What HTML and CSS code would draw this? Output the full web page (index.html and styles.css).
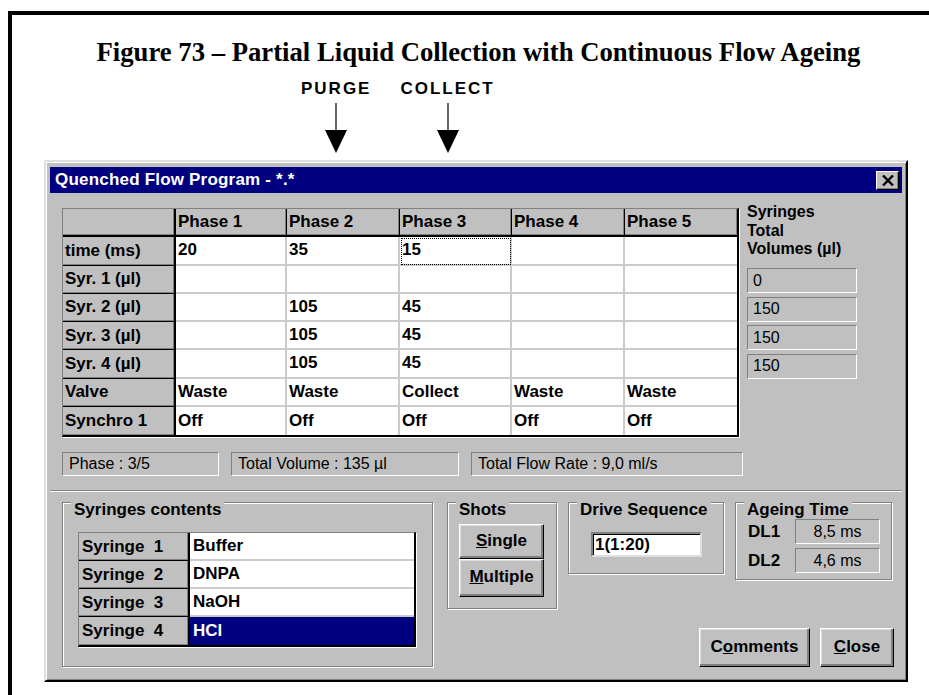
FILE: index.html
```html
<!DOCTYPE html>
<html lang="en">
<head>
    <meta charset="UTF-8">
    <title>Figure 73 - Quenched Flow Program</title>
    <link rel="stylesheet" href="styles.css">
</head>
<body>
    <div class="frame">
        <h1 class="fig-title">Figure 73 – Partial Liquid Collection with Continuous Flow Ageing</h1>

        <!-- Marcadores sobre las fases -->
        <div class="markers">
            <div class="marker marker-purge">
                <span class="marker-label">PURGE</span>
                <svg class="arrow" width="24" height="50" viewBox="0 0 24 50"><line x1="12" y1="0" x2="12" y2="28" stroke="#000" stroke-width="1.2"/><polygon points="1,27 23,27 12,50" fill="#000"/></svg>
            </div>
            <div class="marker marker-collect">
                <span class="marker-label">COLLECT</span>
                <svg class="arrow" width="24" height="50" viewBox="0 0 24 50"><line x1="12" y1="0" x2="12" y2="28" stroke="#000" stroke-width="1.2"/><polygon points="1,27 23,27 12,50" fill="#000"/></svg>
            </div>
        </div>

        <div class="window">
            <div class="titlebar">
                <span>Quenched Flow Program - *.*</span>
                <div class="close-x"><svg width="12" height="11" viewBox="0 0 12 11"><path d="M1 0.5 L11 10.5 M11 0.5 L1 10.5" stroke="#000" stroke-width="2.4"/></svg></div>
            </div>

            <div class="win-body">
                <div class="top">
                    <!-- Tabla de fases -->
                    <div class="prog">
                        <div class="c h hr hc"></div>
                        <div class="c h hr">Phase 1</div>
                        <div class="c h hr">Phase 2</div>
                        <div class="c h hr">Phase 3</div>
                        <div class="c h hr">Phase 4</div>
                        <div class="c h hr last-col">Phase 5</div>

                        <div class="c h hc">time (ms)</div>
                        <div class="c">20</div>
                        <div class="c">35</div>
                        <div class="c focus">15</div>
                        <div class="c"></div>
                        <div class="c last-col"></div>

                        <div class="c h hc">Syr. 1 (µl)</div>
                        <div class="c"></div>
                        <div class="c"></div>
                        <div class="c"></div>
                        <div class="c"></div>
                        <div class="c last-col"></div>

                        <div class="c h hc">Syr. 2 (µl)</div>
                        <div class="c"></div>
                        <div class="c">105</div>
                        <div class="c">45</div>
                        <div class="c"></div>
                        <div class="c last-col"></div>

                        <div class="c h hc">Syr. 3 (µl)</div>
                        <div class="c"></div>
                        <div class="c">105</div>
                        <div class="c">45</div>
                        <div class="c"></div>
                        <div class="c last-col"></div>

                        <div class="c h hc">Syr. 4 (µl)</div>
                        <div class="c"></div>
                        <div class="c">105</div>
                        <div class="c">45</div>
                        <div class="c"></div>
                        <div class="c last-col"></div>

                        <div class="c h hc">Valve</div>
                        <div class="c">Waste</div>
                        <div class="c">Waste</div>
                        <div class="c">Collect</div>
                        <div class="c">Waste</div>
                        <div class="c last-col">Waste</div>

                        <div class="c h hc last-row">Synchro 1</div>
                        <div class="c last-row">Off</div>
                        <div class="c last-row">Off</div>
                        <div class="c last-row">Off</div>
                        <div class="c last-row">Off</div>
                        <div class="c last-row last-col">Off</div>
                    </div>

                    <div class="totals">
                        <div class="totals-label">Syringes<br>Total<br>Volumes (µl)</div>
                        <div class="vboxes">
                            <div class="sunken vbox">0</div>
                            <div class="sunken vbox">150</div>
                            <div class="sunken vbox">150</div>
                            <div class="sunken vbox">150</div>
                        </div>
                    </div>
                </div>

                <div class="status">
                    <div class="sunken sbox s-phase">Phase : 3/5</div>
                    <div class="sunken sbox s-vol">Total Volume : 135 µl</div>
                    <div class="sunken sbox s-rate">Total Flow Rate : 9,0 ml/s</div>
                </div>

                <div class="sep"></div>

                <div class="bottom">
                    <div class="group g-syringes">
                        <div class="group-title">Syringes contents</div>
                        <div class="syr-table">
                            <div class="c h hc">Syringe&nbsp; 1</div>
                            <div class="c last-col">Buffer</div>
                            <div class="c h hc">Syringe&nbsp; 2</div>
                            <div class="c last-col">DNPA</div>
                            <div class="c h hc">Syringe&nbsp; 3</div>
                            <div class="c last-col">NaOH</div>
                            <div class="c h hc last-row">Syringe&nbsp; 4</div>
                            <div class="c last-col last-row selected">HCl</div>
                        </div>
                    </div>

                    <div class="right-col">
                        <div class="right-top">
                            <div class="group g-shots">
                                <div class="group-title">Shots</div>
                                <div class="shot-btns">
                                    <div class="btn btn-single"><u>S</u>ingle</div>
                                    <div class="btn btn-multiple"><u>M</u>ultiple</div>
                                </div>
                            </div>

                            <div class="group g-drive">
                                <div class="group-title">Drive Sequence</div>
                                <div class="field">1(1:20)</div>
                            </div>

                            <div class="group g-ageing">
                                <div class="group-title">Ageing Time</div>
                                <div class="age-row">
                                    <span class="age-label">DL1</span>
                                    <div class="sunken age-val">8,5 ms</div>
                                </div>
                                <div class="age-row">
                                    <span class="age-label">DL2</span>
                                    <div class="sunken age-val">4,6 ms</div>
                                </div>
                            </div>
                        </div>

                        <div class="actions">
                            <div class="btn btn-comments">C<u>o</u>mments</div>
                            <div class="btn btn-close"><u>C</u>lose</div>
                        </div>
                    </div>
                </div>
            </div>
        </div>
    </div>
</body>
</html>
```

FILE: styles.css
```css
/* Estilos globales */
body {
    margin: 0;
    background: #fff;
    font-family: "Liberation Sans", Arial, sans-serif;
    color: #000;
    overflow: hidden;
}

.frame {
    margin: 11px 0 0 8px;
    border-top: 4px solid #000;
    border-left: 4px solid #000;
    height: 700px;
}

/* Titulo de la figura */
.fig-title {
    margin: 0;
    padding: 22px 0 0 16px;
    font: bold 26.7px/30px "Liberation Serif", "Times New Roman", serif;
    text-align: center;
}

.markers {
    display: flex;
    gap: 29px;
    margin: 12px 0 0 289px;
}

.marker {
    display: flex;
    flex-direction: column;
    align-items: center;
}

.marker-label {
    font: bold 17px/19px "Liberation Sans", Arial, sans-serif;
    letter-spacing: 2px;
}

.arrow {
    display: block;
    margin-top: 5px;
}

/* Ventana */
.window {
    margin: 7px 0 0 32px;
    width: 864px;
    height: 522px;
    box-sizing: border-box;
    background: #c0c0c0;
    border: 2px solid;
    border-color: #dfdfdf #000 #000 #dfdfdf;
    box-shadow: inset 1px 1px 0 #fff, inset -1px -1px 0 #808080;
    padding: 5px 4px 4px 4px;
    display: flex;
    flex-direction: column;
    font-size: 17px;
}

.titlebar {
    height: 26px;
    flex: none;
    background: #000080;
    color: #fff;
    font-weight: bold;
    font-size: 17px;
    letter-spacing: 0.2px;
    display: flex;
    align-items: center;
    justify-content: space-between;
    padding: 0 3px 0 5px;
}

.close-x {
    width: 23px;
    height: 19px;
    box-sizing: border-box;
    background: #c0c0c0;
    border: 1px solid;
    border-color: #fff #000 #000 #fff;
    box-shadow: inset -1px -1px 0 #808080;
    display: flex;
    align-items: center;
    justify-content: center;
}

.win-body {
    flex: 1;
    display: flex;
    flex-direction: column;
    padding: 15px 8px 0 12px;
}

/* Tabla de programa */
.top {
    display: flex;
    align-items: flex-start;
    gap: 8px;
}

.prog {
    display: grid;
    grid-template-columns: 113px 111px 113px 112px 113px 112px;
    grid-auto-rows: 28.25px;
    border-top: 1px solid #808080;
    border-left: 1px solid #808080;
    border-right: 2px solid #000;
    border-bottom: 2px solid #000;
    box-shadow: 1px 1px 0 #fff;
}

.c {
    box-sizing: border-box;
    background: #fff;
    border-right: 2px solid #cbcbcb;
    border-bottom: 2px solid #cbcbcb;
    padding: 0 2px;
    display: flex;
    align-items: center;
    font-weight: bold;
    white-space: nowrap;
    overflow: hidden;
}

.c.h {
    background: #c0c0c0;
    border-right: 1px solid #000;
    border-bottom: 1px solid #000;
    box-shadow: inset -1px -1px 0 #808080;
}

.prog .hr {
    border-bottom: 2px solid #000;
}

.c.hc {
    border-right: 2px solid #000;
}

.c.last-col {
    border-right: none;
}

.c.last-row {
    border-bottom: none;
}

.focus {
    outline: 1px dotted #000;
    outline-offset: -2px;
}

.totals {
    width: 110px;
    margin-top: -5px;
}

.totals-label {
    font-weight: bold;
    font-size: 16px;
    line-height: 18.5px;
}

.vboxes {
    display: flex;
    flex-direction: column;
    gap: 3.5px;
    margin-top: 9.5px;
}

.sunken {
    box-sizing: border-box;
    border: 1px solid;
    border-color: #808080 #fff #fff #808080;
    display: flex;
    align-items: center;
    font-size: 16px;
}

.vbox {
    height: 25px;
    padding-left: 5px;
}

/* Barra de estado */
.status {
    display: flex;
    gap: 12px;
    margin-top: 15px;
}

.sbox {
    height: 24px;
    padding-left: 6px;
}

.s-phase { width: 157px; }
.s-vol { width: 228px; }
.s-rate { width: 272px; }

.sep {
    margin: 14px -8px 0 -12px;
    border-top: 1px solid #808080;
    border-bottom: 1px solid #fff;
}

/* Grupos inferiores */
.bottom {
    display: flex;
    gap: 14px;
    margin-top: 10px;
}

.group {
    box-sizing: border-box;
    border: 1px solid #808080;
    box-shadow: inset 1px 1px 0 #fff, 1px 1px 0 #fff;
}

.group-title {
    width: fit-content;
    margin: -2px 0 0 8px;
    padding: 0 3px;
    background: #c0c0c0;
    font-weight: bold;
    line-height: 18px;
}

.g-syringes {
    width: 371px;
    height: 165px;
}

.syr-table {
    display: grid;
    grid-template-columns: 111px 224px;
    grid-auto-rows: 28px;
    margin: 13px 0 0 15px;
    width: 338px;
    box-sizing: border-box;
    border-top: 1px solid #808080;
    border-left: 1px solid #808080;
    border-right: 2px solid #000;
    border-bottom: 2px solid #000;
    box-shadow: 1px 1px 0 #fff;
}

.syr-table .c {
    padding-left: 3px;
}

.selected {
    background: #000080;
    color: #fff;
}

.right-col {
    flex: 1;
    display: flex;
    flex-direction: column;
}

.right-top {
    display: flex;
    align-items: flex-start;
    gap: 11px;
}

.g-shots {
    width: 110px;
    height: 107px;
}

.shot-btns {
    display: flex;
    flex-direction: column;
    width: 85px;
    margin: 5px 0 0 11px;
}

.btn {
    box-sizing: border-box;
    background: #c0c0c0;
    border: 1px solid;
    border-color: #fff #000 #000 #fff;
    box-shadow: inset -2px -2px 0 #808080, inset 1px 1px 0 #dfdfdf;
    display: flex;
    align-items: center;
    justify-content: center;
    font-weight: bold;
    padding-bottom: 2px;
}

.btn-single { height: 35px; }
.btn-multiple { height: 38px; }

.g-drive {
    width: 156px;
    height: 72px;
}

.field {
    width: 111px;
    height: 25px;
    box-sizing: border-box;
    margin: 13px 0 0 22px;
    background: #fff;
    border: 2px solid;
    border-color: #808080 #dfdfdf #dfdfdf #808080;
    box-shadow: inset 1px 1px 0 #000;
    padding-left: 2px;
    font-weight: bold;
    display: flex;
    align-items: center;
}

.g-ageing {
    width: 157px;
    height: 78px;
}

.age-row {
    display: flex;
    align-items: center;
    padding-left: 12px;
    margin-bottom: 4px;
}

.age-label {
    width: 47px;
    font-weight: bold;
}

.age-val {
    width: 85px;
    height: 25px;
    justify-content: center;
}

.actions {
    margin-top: auto;
    display: flex;
    justify-content: flex-end;
    gap: 10px;
}

.btn-comments {
    width: 111px;
    height: 39px;
}

.btn-close {
    width: 74px;
    height: 39px;
}
```
